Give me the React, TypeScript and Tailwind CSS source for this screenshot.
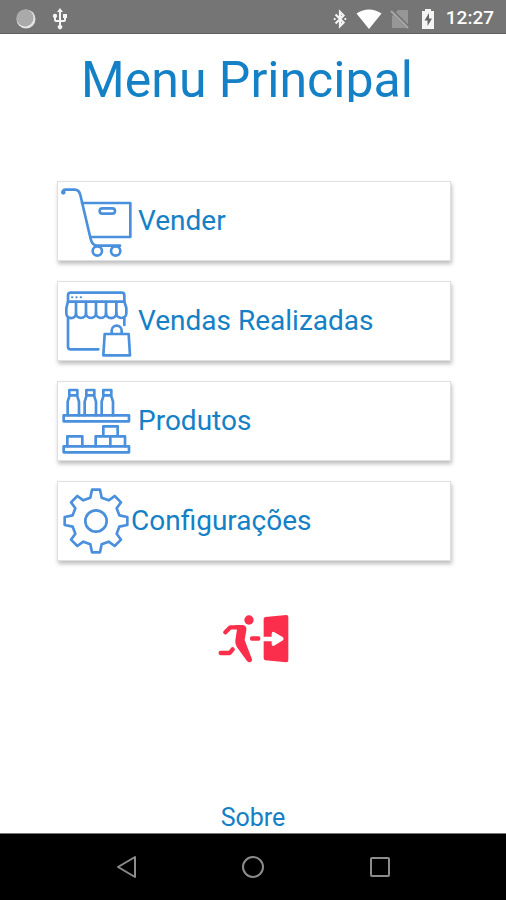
import type { ReactNode } from "react";

const iconProps = {
  fill: "none",
  stroke: "currentColor",
  strokeWidth: 8,
  strokeLinecap: "round" as const,
  strokeLinejoin: "round" as const,
  "aria-hidden": true,
};

function CartIcon() {
  return (
    <svg {...iconProps} viewBox="24 27 240 234" className="h-[78px] w-20 shrink-0 text-[#4a90dd]">
      <circle cx="40" cy="58" r="3" fill="currentColor" />
      <path d="M39 58Q39 50 46 50H74Q87 50 91 66L122 198Q127 218 142 218H210" />
      <path d="M96 90H241V192H121" />
      <rect x="149" y="106" width="46" height="16" rx="8" />
      <circle cx="142" cy="234" r="14" />
      <circle cx="197" cy="234" r="14" />
    </svg>
  );
}

function StoreIcon() {
  return (
    <svg {...iconProps} viewBox="24 27 240 234" className="h-[78px] w-20 shrink-0 text-[#4a90dd]">
      <path d="M54 86V67Q54 59 62 59H215Q223 59 223 67V86Z" />
      <path d="M66 73H67M79 73H80M92 73H93" strokeWidth="6" />
      <path d="M54 86L49 105V121A14 14 0 0 0 78 121A15 14 0 0 0 108 121A15 14 0 0 0 138 121A15 14 0 0 0 168 121A15 14 0 0 0 199 121A15 14 0 0 0 229 121V105L223 86" />
      <path d="M78 121V87M108 121V87M138 121V87M168 121V87M199 121V87" />
      <path d="M54 136V221Q54 229 62 229H145M223 136V156" />
      <path d="M164 183H236L240 247H160Z" />
      <path d="M185 182V173A15 15 0 0 1 215 173V182" />
    </svg>
  );
}

function ShelvesIcon() {
  return (
    <svg {...iconProps} viewBox="24 27 240 234" className="h-[78px] w-20 shrink-0 text-[#4a90dd]">
      <path d="M41 127H237V145H41ZM41 220H237V238H41Z" />
      <path d="M58 51H82V67H58ZM59 67L53 86V127M81 67L87 86V127" />
      <path d="M109 51H133V67H109ZM110 67L104 86V127M132 67L138 86V127" />
      <path d="M160 51H184V67H160ZM161 67L155 86V127M183 67L189 86V127" />
      <path d="M52 220V190H97V220M137 220V190H225V220M181 190V220M160 190V160H203V190" />
    </svg>
  );
}

function GearIcon() {
  return (
    <svg {...iconProps} viewBox="24 27 219 234" className="h-[78px] w-[73px] shrink-0 text-[#4a90dd]">
      <g transform="translate(138 144)">
        <path d="M-17-70L-12-94H12L17-70L38-62L56-75L75-56L62-38L70-17L94-12V12L70 17L62 38L75 56L56 75L38 62L17 70L12 94H-12L-17 70L-38 62L-56 75L-75 56L-62 38L-70 17L-94 12V-12L-70-17L-62-38L-75-56L-56-75L-38-62Z" />
        <circle r="32" />
      </g>
    </svg>
  );
}

function ExitIcon() {
  return (
    <svg viewBox="36 39 219 150" className="h-[50px] w-[73px]" fill="#fb2f4c" aria-hidden="true">
      <circle cx="132" cy="60" r="14" />
      <path d="M90 75H114Q126 78 124 91L119 120L141 178Q142 186 134 187Q129 187 126 183L95 140Q89 131 91 121L96 88Z" />
      <path d="M61 97L76 82H104M47 159H74L83 148" fill="none" stroke="#fb2f4c" strokeWidth="13" strokeLinecap="round" strokeLinejoin="round" />
      <rect x="135" y="109" width="31" height="13" rx="5" />
      <path d="M181 51L244 45Q250 45 250 51V181Q250 187 244 187L181 181Q176 180 176 175V124H200V133Q201 140 207 137L234 121Q238 117 234 112L207 96Q201 94 200 101V110H176V57Q176 52 181 51Z" />
    </svg>
  );
}

function StatusBar() {
  return (
    <header className="flex h-[34px] items-center justify-between border-b border-[#606060] bg-[#757575] pt-1 pr-3 pl-4 text-white">
      <div className="flex items-center gap-3">
        <svg viewBox="0 0 20 20" className="size-5" aria-hidden="true">
          <circle cx="10" cy="10" r="9.5" fill="#e4e4e4" />
          <circle cx="9" cy="9" r="8.5" fill="#aaa" />
        </svg>
        <svg viewBox="0 0 24 24" className="size-6" fill="#f4f4f4" aria-hidden="true">
          <path d="M15 7v4h1v2h-3V5h2l-3-4-3 4h2v8H8v-2.1c.7-.4 1.2-1.1 1.2-1.9a2.2 2.2 0 1 0-4.4 0c0 .8.5 1.5 1.2 1.9V13a2 2 0 0 0 2 2h3v3.1a2.2 2.2 0 1 0 2 0V15h3a2 2 0 0 0 2-2v-2h1V7z" />
        </svg>
      </div>
      <div className="flex items-center gap-2">
        <svg viewBox="0 0 18 22" className="h-5 w-4" fill="none" stroke="#f4f4f4" strokeWidth="2.5" aria-hidden="true">
          <path d="M4 6L13 15L9 19V3L13 7L4 16" />
          <path d="M2 11h2M14 11h2" />
        </svg>
        <svg viewBox="0 0 26 20" className="h-5 w-[26px]" fill="#fff" aria-hidden="true">
          <path d="M13 20L.5 4.5Q13-3.500 25.500 4.500Z" />
        </svg>
        <svg viewBox="0 0 20 20" className="size-5" aria-hidden="true">
          <path d="M8 1H18V19H2V7Z" fill="#979797" />
          <path d="M1 1L19 19" stroke="#757575" strokeWidth="4" />
          <path d="M1 2L18 19" stroke="#a8a8a8" strokeWidth="2" />
        </svg>
        <svg viewBox="0 0 20 20" className="size-5" aria-hidden="true">
          <path d="M7 0H13V2H16V20H4V2H7Z" fill="#f4f4f4" />
          <path d="M11 4L6.500 11.500H9.500V17L14 9.500H11Z" fill="#666" />
        </svg>
        <time className="text-[19px] font-medium">12:27</time>
      </div>
    </header>
  );
}

function MenuButton({ icon, label }: { icon: ReactNode; label: string }) {
  return (
    <button
      type="button"
      className="flex h-20 w-full items-center border border-[#e0e0e0] bg-white text-left text-[28px] shadow-[1px_3px_4px_rgba(0,0,0,0.25)]"
    >
      {icon}
      <span>{label}</span>
    </button>
  );
}

export default function App() {
  return (
    <div className="flex min-h-screen flex-col bg-white font-['Roboto',sans-serif] text-[#1480c6]">
      <StatusBar />

      <main className="flex flex-1 flex-col">
        <h1 className="mt-4 h-[52px] overflow-hidden pr-3 text-center text-[50px] leading-[60px]">
          Menu Principal
        </h1>

        <nav className="mt-[79px] flex flex-col gap-5 pr-[55px] pl-[57px]">
          <MenuButton icon={<CartIcon />} label="Vender" />
          <MenuButton icon={<StoreIcon />} label="Vendas Realizadas" />
          <MenuButton icon={<ShelvesIcon />} label="Produtos" />
          <MenuButton icon={<GearIcon />} label="Configurações" />
        </nav>

        <button type="button" aria-label="Sair" className="mx-auto mt-[52px]">
          <ExitIcon />
        </button>

        <a href="#sobre" className="mx-auto mt-auto text-[25px] leading-[30px]">
          Sobre
        </a>
      </main>

      <footer className="grid h-[67px] grid-cols-3 place-items-center border-t border-[#777] bg-black px-[12.5%] text-[#8c8c8c]">
        <button type="button" aria-label="Voltar">
          <svg {...iconProps} strokeWidth="2" viewBox="0 0 24 24" className="size-6">
            <path d="M20 2V22L3 12Z" />
          </svg>
        </button>
        <button type="button" aria-label="Início">
          <svg {...iconProps} strokeWidth="2" viewBox="0 0 24 24" className="size-6">
            <circle cx="12" cy="12" r="10" />
          </svg>
        </button>
        <button type="button" aria-label="Recentes">
          <svg {...iconProps} strokeWidth="2" viewBox="0 0 24 24" className="size-6">
            <rect x="3" y="3" width="18" height="18" rx="1" />
          </svg>
        </button>
      </footer>
    </div>
  );
}
